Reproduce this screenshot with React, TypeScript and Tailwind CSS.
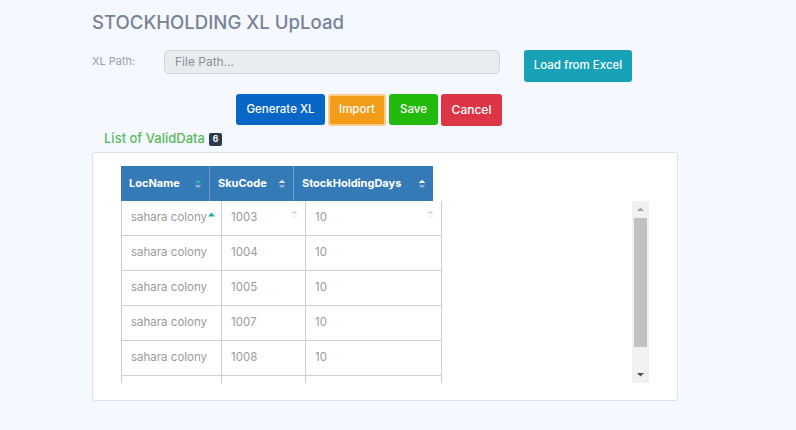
import React from "react";

const rows = [
  ["sahara colony", "1003", "10"],
  ["sahara colony", "1004", "10"],
  ["sahara colony", "1005", "10"],
  ["sahara colony", "1007", "10"],
  ["sahara colony", "1008", "10"],
  ["", "", ""],
];

function SortIcon({ up = "#b9c9dc", down = "#8fb0d4" }: { up?: string; down?: string }) {
  return (
    <svg width="8" height="10" viewBox="0 0 8 10">
      <path d="M0.5 4 L4 0.8 L7.5 4 Z" fill={up} />
      <path d="M0.5 6 L4 9.2 L7.5 6 Z" fill={down} />
    </svg>
  );
}

export default function App() {
  return (
    <div
      className="w-[796px] h-[430px] bg-[#f5f8fe] overflow-hidden text-[#6c757d]"
      style={{ fontFamily: "Inter, 'Open Sans', sans-serif" }}
    >
      <div className="pl-[92px] pt-[10px]">
        <h1 className="text-[18.6px] font-medium text-[#7a8396] leading-[24px]">
          STOCKHOLDING XL UpLoad
        </h1>
        <div className="flex mt-[16px] h-[32px]">
          <div className="w-[72px] text-[11px] text-[#9aa0a8] pt-[3px]">XL Path:</div>
          <div className="w-[336px] h-[24px] rounded-[5px] bg-[#e9ecef] border border-[#ced4da] text-[12px] text-[#8a9096] pl-[10px] leading-[22px]">
            File Path...
          </div>
          <button className="ml-[24px] w-[108px] h-[32px] rounded-[3px] bg-[#17a2b8] text-white text-[11.5px] font-medium">
            Load from Excel
          </button>
        </div>
        <div className="flex gap-[3px] ml-[144px] mt-[12px]">
          <button className="w-[89px] h-[31px] rounded-[3px] bg-[#0866c6] text-white text-[11.5px] font-medium">
            Generate XL
          </button>
          <button className="w-[58px] h-[32px] rounded-[3px] bg-[#f39c1a] text-white text-[11.5px] font-medium border-2 border-[#f8cd92]">
            Import
          </button>
          <button className="w-[49px] h-[31px] rounded-[3px] bg-[#22bb0d] text-white text-[11.5px] font-medium">
            Save
          </button>
          <button className="w-[61px] h-[32px] rounded-[3px] bg-[#dc3545] text-white text-[12px] font-medium">
            Cancel
          </button>
        </div>
        <div className="flex items-center ml-[12px] mt-[5px] h-[16px]">
          <span className="text-[13px] font-medium text-[#5cb85c]">List of ValidData</span>
          <span className="ml-[4px] w-[13px] h-[13px] rounded-[2px] bg-[#2e3b4e] text-white text-[8.5px] font-bold flex items-center justify-center">
            6
          </span>
        </div>
        <div className="mt-[5px] w-[586px] h-[249px] bg-white border border-[#dde1e6] rounded-[3px] pl-[28px] pt-[13px]">
          <div className="flex h-[35px] w-[312px] bg-[#337ab7] text-white text-[11px] font-bold">
            <div className="w-[89px] flex items-center justify-between pl-[8px] pr-[7px] border-r border-[#6f9dcb]">
              <span>LocName</span>
              <SortIcon up="#2bb3b1" down="#8fb0d4" />
            </div>
            <div className="w-[84px] flex items-center justify-between pl-[8px] pr-[7px] border-r border-[#6f9dcb]">
              <span>SkuCode</span>
              <SortIcon up="#dbe5f0" down="#8fb0d4" />
            </div>
            <div className="flex-1 flex items-center justify-between pl-[8px] pr-[7px]">
              <span>StockHoldingDays</span>
              <SortIcon up="#ffffff" down="#8fb0d4" />
            </div>
          </div>
          <div className="flex h-[182px]">
            <div className="w-[511px] h-[182px] overflow-hidden">
              <div className="w-[321px] border-l border-r border-[#cfcfcf]">
                {rows.map((r, i) => (
                  <div key={i} className="flex h-[35px] border-b border-[#cfcfcf] text-[11.5px] text-[#9a9a9a]">
                    <div className="w-[100px] flex items-center justify-between pl-[9px] pr-[6px] border-r border-[#cfcfcf]">
                      <span className="whitespace-nowrap">{r[0]}</span>
                      {i === 0 && (
                        <svg width="7" height="5" viewBox="0 0 7 5" className="mb-[8px] -ml-[4px]">
                          <path d="M0 4.5 L3.5 0.5 L7 4.5 Z" fill="#2aa89e" />
                        </svg>
                      )}
                    </div>
                    <div className="w-[84px] flex items-center justify-between pl-[9px] pr-[7px] border-r border-[#cfcfcf]">
                      <span>{r[1]}</span>
                      {i === 0 && (
                        <svg width="7" height="9" viewBox="0 0 7 9" className="mb-[8px]">
                          <path d="M0 3.5 L3.5 0.5 L7 3.5 Z" fill="#d6d6d6" />
                          <path d="M0 5.5 L3.5 8.5 L7 5.5 Z" fill="#f2f2f2" />
                        </svg>
                      )}
                    </div>
                    <div className="flex-1 flex items-center justify-between pl-[9px] pr-[7px]">
                      <span>{r[2]}</span>
                      {i === 0 && (
                        <svg width="7" height="9" viewBox="0 0 7 9" className="mb-[8px]">
                          <path d="M0 3.5 L3.5 0.5 L7 3.5 Z" fill="#d6d6d6" />
                          <path d="M0 5.5 L3.5 8.5 L7 5.5 Z" fill="#f2f2f2" />
                        </svg>
                      )}
                    </div>
                  </div>
                ))}
              </div>
            </div>
            <div className="w-[17px] h-[182px] bg-[#f1f1f1] flex flex-col items-center">
              <svg width="17" height="17" viewBox="0 0 17 17">
                <path d="M5 10 L8.5 6.5 L12 10 Z" fill="#a3a3a3" />
              </svg>
              <div className="w-[13px] h-[129px] bg-[#c1c1c1]" />
              <div className="flex-1" />
              <svg width="17" height="17" viewBox="0 0 17 17">
                <path d="M5 7 L8.5 10.5 L12 7 Z" fill="#505050" />
              </svg>
            </div>
          </div>
        </div>
      </div>
    </div>
  );
}
